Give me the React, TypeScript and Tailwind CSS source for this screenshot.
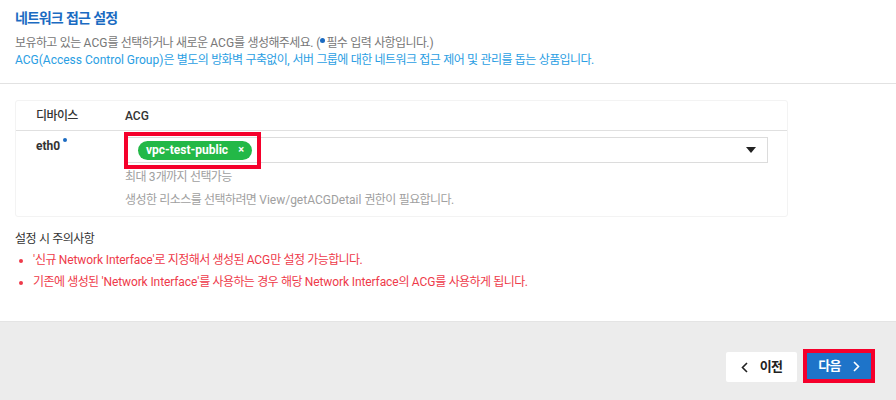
import { Fragment } from 'react'

const font = { fontFamily: 'Roboto, "Noto Sans CJK KR", sans-serif' }

// korean glyphs in the original are narrower than Noto CJK, squeeze only those runs
const K = ({ t, tight }: { t: string; tight?: boolean }) => (
  <>
    {t.split(/([\uAC00-\uD7A3]+)/).map((part, i) =>
      /[\uAC00-\uD7A3]/.test(part) ? (
        <span key={i} className={tight ? 'tracking-[-1px]' : 'tracking-[-0.6px]'}>
          {part}
        </span>
      ) : (
        <Fragment key={i}>{part}</Fragment>
      )
    )}
  </>
)

const notices = [
  "'신규 Network Interface'로 지정해서 생성된 ACG만 설정 가능합니다.",
  "기존에 생성된 'Network Interface'를 사용하는 경우 해당 Network Interface의 ACG를 사용하게 됩니다.",
]

export default function App() {
  return (
    <div className="w-[896px] h-[400px] flex flex-col bg-white overflow-hidden" style={font}>
      <div className="flex-1 flex flex-col">
        {/* header */}
        <div className="px-[15px] pt-[8px] pb-[14px] border-b border-[#e2e2e2]">
          <h1 className="text-[14px] leading-[20px] font-bold text-[#1b6bc2]">
            <K t="네트워크 접근 설정" tight />
          </h1>
          <p className="mt-[7px] text-[12px] leading-[17px] text-[#777]">
            <K t="보유하고 있는 ACG를 선택하거나 새로운 ACG를 생성해주세요. (" />
            <span className="inline-block w-[5px] h-[5px] rounded-full bg-[#1b6bc2] align-[4px] mr-[1px]" />
            <K t="필수 입력 사항입니다.)" />
          </p>
          <p className="text-[12px] leading-[17px] text-[#2a9ee3]">
            <K t="ACG(Access Control Group)은 별도의 방화벽 구축없이, 서버 그룹에 대한 네트워크 접근 제어 및 관리를 돕는 상품입니다." />
          </p>
        </div>

        {/* table card */}
        <div className="mx-[15px] mt-[16px] w-[773px] border border-[#f3f3f3] rounded-[3px]">
          <div className="flex h-[30px] items-center border-b border-[#e0e0e0] text-[12px] font-medium text-[#333]">
            <div className="w-[109px] pl-[20px]">
              <K t="디바이스" />
            </div>
            <div>ACG</div>
          </div>
          <div className="flex pt-[6px] pb-[8px]">
            <div className="w-[109px] pl-[20px] text-[12px] font-bold text-[#333] leading-[18px]">
              eth0
              <span className="inline-block w-[4px] h-[4px] rounded-full bg-[#1b6bc2] align-[8px] ml-[3px]" />
            </div>
            <div className="flex flex-col w-[643px]">
              <div className="relative h-[26px] border border-[#dcdcdc] flex items-center justify-between pl-[12px] pr-[10px]">
                <span className="h-[19px] px-[8px] rounded-full bg-[#23b847] text-white text-[12px] font-bold flex items-center gap-[10px]">
                  vpc-test-public <span className="text-[11px] font-bold">×</span>
                </span>
                <svg width="10" height="6" viewBox="0 0 10 6" className="mr-[1px]">
                  <path d="M0 0 H10 L5 6 Z" fill="#222" />
                </svg>
                <div className="absolute left-[-2px] top-[-6px] w-[137px] h-[37px] border-[4px] border-[#f5002b]" />
              </div>
              <p className="mt-[6px] text-[12px] leading-[16px] text-[#a0a0a0]">
                <K t="최대 3개까지 선택가능" />
              </p>
              <p className="mt-[7px] text-[12px] leading-[16px] text-[#a0a0a0]">
                <K t="생성한 리소스를 선택하려면 View/getACGDetail 권한이 필요합니다." />
              </p>
            </div>
          </div>
        </div>

        {/* notices */}
        <div className="px-[15px] mt-[14px]">
          <p className="text-[12px] leading-[17px] text-[#333]">
            <K t="설정 시 주의사항" />
          </p>
          <ul className="mt-[4px] flex flex-col gap-[5px]">
            {notices.map((n) => (
              <li key={n} className="flex items-center text-[12px] leading-[17px] text-[#ee3a4a]">
                <span className="w-[4px] h-[4px] rounded-full bg-[#ee3a4a] ml-[4px] mr-[10px]" />
                <span className="tracking-[-0.1px]">
                  <K t={n} />
                </span>
              </li>
            ))}
          </ul>
        </div>
      </div>

      {/* footer */}
      <div className="h-[79px] bg-[#ececec] border-t border-[#e4e4e4] flex justify-end items-start pt-[30px] pr-[21px] gap-[6px]">
        <button className="h-[30px] w-[71px] bg-white rounded-[2px] flex items-center justify-center gap-[12px] text-[13px] font-bold text-[#222]">
          <svg width="7" height="11" viewBox="0 0 7 11">
            <path d="M6 1 L1.5 5.5 L6 10" stroke="#222" strokeWidth="1.6" fill="none" />
          </svg>
          <K t="이전" />
        </button>
        <div className="mt-[-3px] border-[4px] border-[#f5002b]">
          <button className="h-[26px] w-[64px] bg-[#1e74c9] flex items-center justify-center gap-[12px] text-[13px] font-bold text-white">
            <K t="다음" />
            <svg width="7" height="11" viewBox="0 0 7 11">
              <path d="M1 1 L5.5 5.5 L1 10" stroke="#fff" strokeWidth="1.6" fill="none" />
            </svg>
          </button>
        </div>
      </div>
    </div>
  )
}
